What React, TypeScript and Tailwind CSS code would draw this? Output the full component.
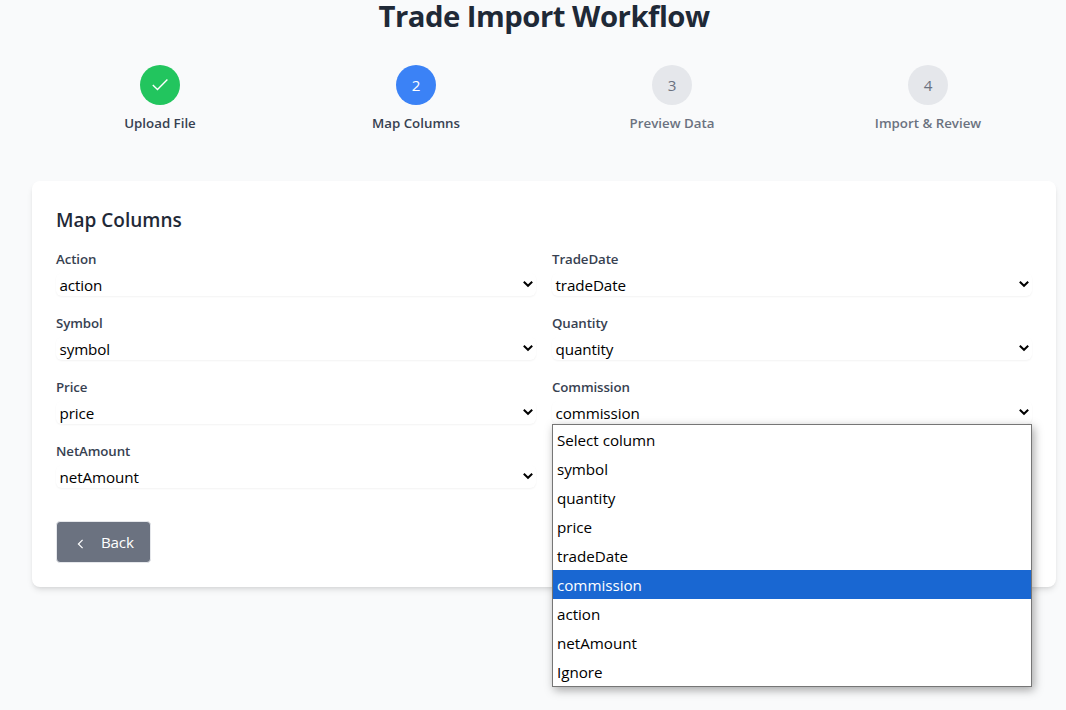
const steps = [
  { label: 'Upload File', state: 'done' },
  { label: 'Map Columns', state: 'current' },
  { label: 'Preview Data', state: 'pending' },
  { label: 'Import & Review', state: 'pending' },
];

const fields = [
  { label: 'Action', value: 'action' },
  { label: 'TradeDate', value: 'tradeDate' },
  { label: 'Symbol', value: 'symbol' },
  { label: 'Quantity', value: 'quantity' },
  { label: 'Price', value: 'price' },
  { label: 'Commission', value: 'commission' },
  { label: 'NetAmount', value: 'netAmount' },
];

const options = ['Select column', 'symbol', 'quantity', 'price', 'tradeDate', 'commission', 'action', 'netAmount', 'Ignore'];

const circleColors: Record<string, string> = {
  done: 'bg-[#22c55e] text-white',
  current: 'bg-[#3b82f6] text-white',
  pending: 'bg-[#e5e7eb] text-[#6b7280]',
};

function Stepper() {
  return (
    <ol className="mb-12 grid grid-cols-4">
      {steps.map((step, i) => (
        <li key={step.label} className="flex flex-col items-center">
          <span className={`flex size-10 items-center justify-center rounded-full text-[15.2px] ${circleColors[step.state]}`}>
            {step.state === 'done' ? (
              <svg viewBox="0 0 20 20" className="size-5" fill="none" stroke="currentColor" strokeWidth="1.4">
                <path d="M2.8 10 L7.5 14.5 L17.4 4.6" />
              </svg>
            ) : (
              i + 1
            )}
          </span>
          <span
            className={`mt-2 text-[13.3px] leading-5 font-semibold ${
              step.state === 'pending' ? 'text-[#6b7280]' : 'text-[#374151]'
            }`}
          >
            {step.label}
          </span>
        </li>
      ))}
    </ol>
  );
}

function OptionList() {
  return (
    <ul className="absolute top-[23px] left-0 z-10 w-full border border-[#767676] bg-white shadow-[2px_3px_9px_rgba(0,0,0,0.35)]">
      {options.map((option) => (
        <li
          key={option}
          className={`h-[29px] px-1 text-[15.2px] leading-[30px] tracking-[-0.03px] ${
            option === 'commission' ? 'bg-[#1967d2] text-white' : 'text-black'
          }`}
        >
          {option}
        </li>
      ))}
    </ul>
  );
}

function Field({ label, value }: { label: string; value: string }) {
  return (
    <div>
      <div className="text-[13.3px] leading-5 font-semibold tracking-[-0.1px] text-[#374151]">{label}</div>
      <div className="relative mt-1 h-6">
        <div className="flex h-[23px] items-center justify-between rounded-md bg-white pr-[3px] pl-[3.5px] text-[15.2px] leading-6 tracking-[-0.1px] text-black shadow-[0_1px_2px_rgba(0,0,0,0.05)]">
          <span className="pt-px">{value}</span>
          <svg viewBox="0 0 10 8" className="mb-px h-2 w-2.5" fill="none" stroke="currentColor" strokeWidth="2">
            <path d="M0.8 1.8 L5 5.8 L9.2 1.8" />
          </svg>
        </div>
        {value === 'commission' && <OptionList />}
      </div>
    </div>
  );
}

export default function App() {
  return (
    <div className="h-[710px] overflow-hidden bg-[#f9fafb] pr-[10px] pl-8 font-['Open_Sans','Noto_Sans',sans-serif]">
      <h1 className="mb-[33px] text-center text-[29.3px] leading-8 font-bold tracking-[-0.5px] text-[#1f2937]">
        Trade Import Workflow
      </h1>
      <Stepper />
      <section className="rounded-lg bg-white p-6 shadow-[0_4px_6px_-1px_rgba(0,0,0,0.1),0_2px_4px_-2px_rgba(0,0,0,0.1)]">
        <h2 className="mb-[15px] pt-px text-[19px] leading-7 font-semibold text-[#1f2937]">Map Columns</h2>
        <div className="grid grid-cols-2 gap-4">
          {fields.map((field) => (
            <Field key={field.label} {...field} />
          ))}
        </div>
        <button className="mt-8 flex h-[42px] w-[95px] items-center rounded border border-[#e5e7eb] bg-[#6b7280] pl-[20px] text-[15.2px] tracking-[-0.2px] text-white">
          <svg viewBox="0 0 7 10" className="mt-1 h-2.5 w-[7px]" fill="none" stroke="currentColor" strokeWidth="1.2">
            <path d="M5.6 0.8 L1.4 5 L5.6 9.2" />
          </svg>
          <span className="ml-[17px]">Back</span>
        </button>
      </section>
    </div>
  );
}
